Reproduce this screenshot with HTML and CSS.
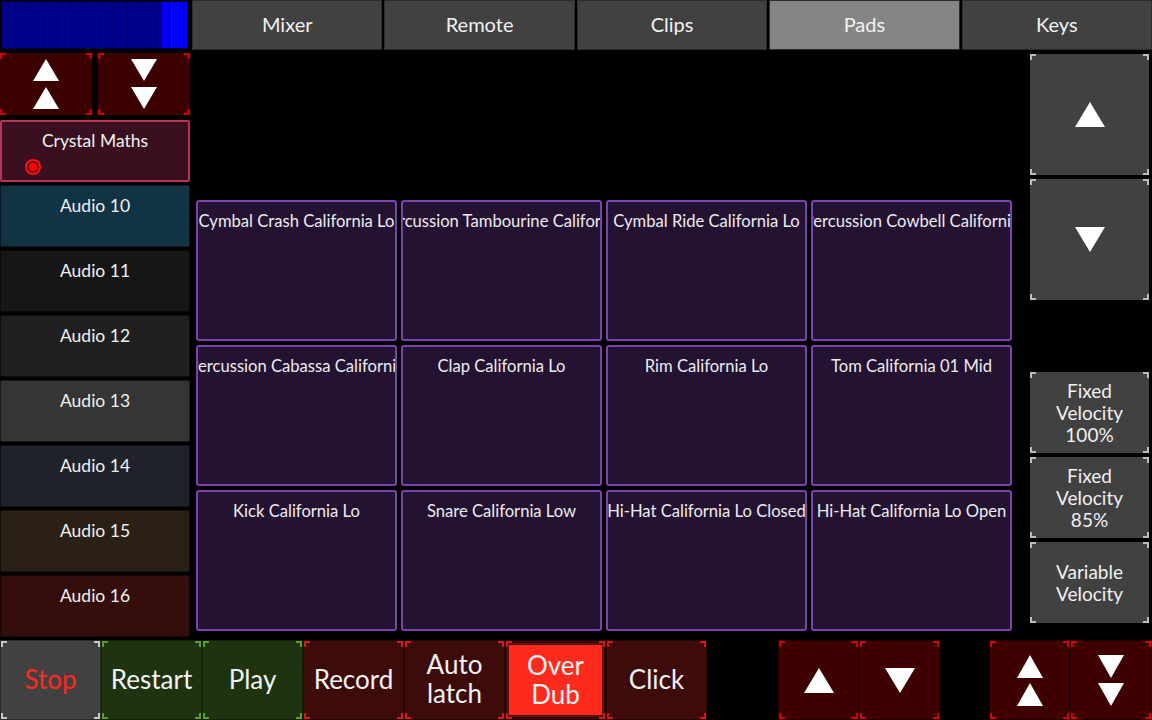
FILE: index.html
```html
<!DOCTYPE html>
<html>
<head>
<meta charset="utf-8">
<link rel="stylesheet" href="styles.css">
</head>
<body>
<div class="app">
  <div class="meter-cell"><div class="meter"></div></div>
  <nav class="tabs">
    <div class="tab">Mixer</div>
    <div class="tab">Remote</div>
    <div class="tab">Clips</div>
    <div class="tab active">Pads</div>
    <div class="tab">Keys</div>
  </nav>

  <aside class="sidebar">
    <div class="updown">
      <div class="btn-red mk">
        <svg width="26" height="50" viewBox="0 0 26 50"><polygon points="13,0 26,22 0,22" fill="#fff"/><polygon points="13,28 26,50 0,50" fill="#fff"/></svg>
      </div>
      <div class="btn-red mk">
        <svg width="26" height="50" viewBox="0 0 26 50"><polygon points="0,0 26,0 13,22" fill="#fff"/><polygon points="0,28 26,28 13,50" fill="#fff"/></svg>
      </div>
    </div>
    <div class="track crystal">
      <span>Crystal Maths</span>
      <span class="radio"></span>
    </div>
    <div class="track c10">Audio 10</div>
    <div class="track c11">Audio 11</div>
    <div class="track c12">Audio 12</div>
    <div class="track c13">Audio 13</div>
    <div class="track c14">Audio 14</div>
    <div class="track c15">Audio 15</div>
    <div class="track c16">Audio 16</div>
  </aside>

  <main class="main">
    <section class="pads">
      <div class="pad"><span>Cymbal Crash California Lo</span></div>
      <div class="pad"><span>Percussion Tambourine California</span></div>
      <div class="pad"><span>Cymbal Ride California Lo</span></div>
      <div class="pad"><span>Percussion Cowbell California</span></div>
      <div class="pad"><span>Percussion Cabassa California</span></div>
      <div class="pad"><span>Clap California Lo</span></div>
      <div class="pad"><span>Rim California Lo</span></div>
      <div class="pad"><span>Tom California 01 Mid</span></div>
      <div class="pad"><span>Kick California Lo</span></div>
      <div class="pad"><span>Snare California Low</span></div>
      <div class="pad"><span>Hi-Hat California Lo Closed</span></div>
      <div class="pad"><span>Hi-Hat California Lo Open</span></div>
    </section>
    <section class="right">
      <div class="btn-gray mk big">
        <svg width="30" height="25" viewBox="0 0 30 25"><polygon points="15,0 30,25 0,25" fill="#fff"/></svg>
      </div>
      <div class="btn-gray mk big">
        <svg width="30" height="25" viewBox="0 0 30 25"><polygon points="0,0 30,0 15,25" fill="#fff"/></svg>
      </div>
      <div class="spacer"></div>
      <div class="btn-gray mk vel">Fixed<br>Velocity<br>100%</div>
      <div class="btn-gray mk vel">Fixed<br>Velocity<br>85%</div>
      <div class="btn-gray mk vel">Variable<br>Velocity</div>
    </section>
  </main>

  <footer class="bottom">
    <div class="tb gray mk stop">Stop</div>
    <div class="tb green mk">Restart</div>
    <div class="tb green mk">Play</div>
    <div class="tb red mk">Record</div>
    <div class="tb red mk">Auto<br>latch</div>
    <div class="tb red mk"><div class="overdub">Over<br>Dub</div></div>
    <div class="tb red mk">Click</div>
    <div class="gap1"></div>
    <div class="tb dred mk">
      <svg width="30" height="25" viewBox="0 0 30 25"><polygon points="15,0 30,25 0,25" fill="#fff"/></svg>
    </div>
    <div class="tb dred mk">
      <svg width="30" height="25" viewBox="0 0 30 25"><polygon points="0,0 30,0 15,25" fill="#fff"/></svg>
    </div>
    <div class="gap2"></div>
    <div class="tb dred mk">
      <svg width="26" height="51" viewBox="0 0 26 51"><polygon points="13,0 26,23 0,23" fill="#fff"/><polygon points="13,28 26,51 0,51" fill="#fff"/></svg>
    </div>
    <div class="tb dred mk last">
      <svg width="26" height="51" viewBox="0 0 26 51"><polygon points="0,0 26,0 13,23" fill="#fff"/><polygon points="0,28 26,28 13,51" fill="#fff"/></svg>
    </div>
  </footer>
</div>
</body>
</html>
```
FILE: styles.css
```css
* { box-sizing: border-box; }
html, body {
  margin: 0;
  padding: 0;
  background: #000;
}
body {
  width: 1152px;
  height: 720px;
  overflow: hidden;
  font-family: "Lato", "Open Sans", sans-serif;
  color: #f0f0f0;
}
.app {
  display: grid;
  grid-template-columns: 190px 962px;
  grid-template-rows: 50px 590px 80px;
  width: 1152px;
  height: 720px;
}

/* corner marks */
.mk { position: relative; --mc: #d00; }
.mk::after {
  content: "";
  position: absolute;
  inset: 0;
  pointer-events: none;
  background:
    linear-gradient(var(--mc), var(--mc)) left top / 6px 2px no-repeat,
    linear-gradient(var(--mc), var(--mc)) left top / 2px 6px no-repeat,
    linear-gradient(var(--mc), var(--mc)) right top / 6px 2px no-repeat,
    linear-gradient(var(--mc), var(--mc)) right top / 2px 6px no-repeat,
    linear-gradient(var(--mc), var(--mc)) left bottom / 6px 2px no-repeat,
    linear-gradient(var(--mc), var(--mc)) left bottom / 2px 6px no-repeat,
    linear-gradient(var(--mc), var(--mc)) right bottom / 6px 2px no-repeat,
    linear-gradient(var(--mc), var(--mc)) right bottom / 2px 6px no-repeat;
}

/* meter */
.meter-cell { padding: 1px 2px 1px 1px; }
.meter {
  height: 48px;
  border: 1px solid #00003a;
  background:
    repeating-linear-gradient(to right, transparent 0 13px, #000058 13px 14px),
    linear-gradient(to right, #00008a 0 160px, #0000ff 160px);
}

/* tabs */
.tabs {
  display: flex;
  gap: 2px;
  padding-left: 2px;
}
.tab {
  flex: 1;
  background: #414141;
  border: 1px solid #2c2c2c;
  display: flex;
  align-items: center;
  justify-content: center;
  font-size: 20px;
  padding-bottom: 2px;
  color: #f2f2f2;
}
.tab.active { background: #858585; }

/* sidebar */
.sidebar {
  display: flex;
  flex-direction: column;
  padding-top: 3px;
  gap: 3px;
}
.updown {
  display: flex;
  gap: 6px;
  height: 62px;
  margin-bottom: 2px;
}
.btn-red {
  flex: 1;
  background: #3c0000;
  display: flex;
  align-items: center;
  justify-content: center;
  --mc: #d40000;
}
.track {
  height: 62px;
  border-radius: 2px;
  text-align: center;
  font-size: 17.5px;
  line-height: 22px;
  padding-top: 9px;
  border: 1px solid rgba(0,0,0,0.5);
  width: 190px;
}
.crystal {
  background: #3a1020;
  border: 2px solid #b8355a;
  position: relative;
  display: flex;
  flex-direction: column;
  align-items: center;
  padding-top: 8px;
}
.radio {
  position: absolute;
  left: 23px;
  top: 37px;
  width: 16px;
  height: 16px;
  border-radius: 50%;
  border: 2px solid #ff1010;
  background: #ff0000;
  box-shadow: inset 0 0 0 1.5px #3a1020;
}
.c10 { background: #113344; }
.c11 { background: #161616; }
.c12 { background: #202020; }
.c13 { background: #353535; }
.c14 { background: #20222b; }
.c15 { background: #2a2016; }
.c16 { background: #350d0a; }

/* main */
.main {
  display: flex;
}
.pads {
  margin-top: 150px;
  margin-left: 6px;
  display: grid;
  grid-template-columns: repeat(4, 201px);
  grid-template-rows: repeat(3, 141px);
  gap: 4px;
  align-self: flex-start;
}
.pad {
  background: #241233;
  border: 2px solid #7d42ad;
  border-radius: 3px;
  display: flex;
  justify-content: center;
  overflow: hidden;
  padding-top: 9px;
  font-size: 16.6px;
  line-height: 20px;
  color: #ececec;
}
.pad span {
  white-space: nowrap;
  flex-shrink: 0;
}
.right {
  margin-left: 18px;
  width: 119px;
  display: flex;
  flex-direction: column;
  padding-top: 4px;
  gap: 4px;
}
.btn-gray {
  background: #414141;
  display: flex;
  align-items: center;
  justify-content: center;
  text-align: center;
  --mc: #bdbdbd;
}
.big { height: 121px; }
.spacer { height: 64px; }
.vel {
  height: 81px;
  font-size: 19px;
  line-height: 22px;
  color: #f0f0f0;
}

/* bottom */
.bottom {
  grid-column: 1 / span 2;
  display: flex;
  height: 80px;
}
.tb {
  width: 101px;
  height: 80px;
  display: flex;
  align-items: center;
  justify-content: center;
  text-align: center;
  font-size: 26px;
  line-height: 29px;
  padding-bottom: 2px;
  color: #f2f2f2;
  border: 1px solid rgba(0,0,0,0.35);
}
.gray { background: #414141; --mc: #c8c8c8; }
.stop { color: #ff2a1e; }
.green { background: #1e3310; --mc: #5aa020; }
.red { background: #3d0c0a; --mc: #d81818; }
.dred { background: #3e0000; --mc: #d80000; width: 81px; padding-bottom: 0; }
.overdub {
  width: 97px;
  height: 74px;
  margin-top: 2px;
  background: #ff2a1e;
  border: 2px solid #5a1210;
  display: flex;
  align-items: center;
  justify-content: center;
}
.gap1 { width: 71px; }
.gap2 { width: 49px; }
.last { width: 82px; }
```
